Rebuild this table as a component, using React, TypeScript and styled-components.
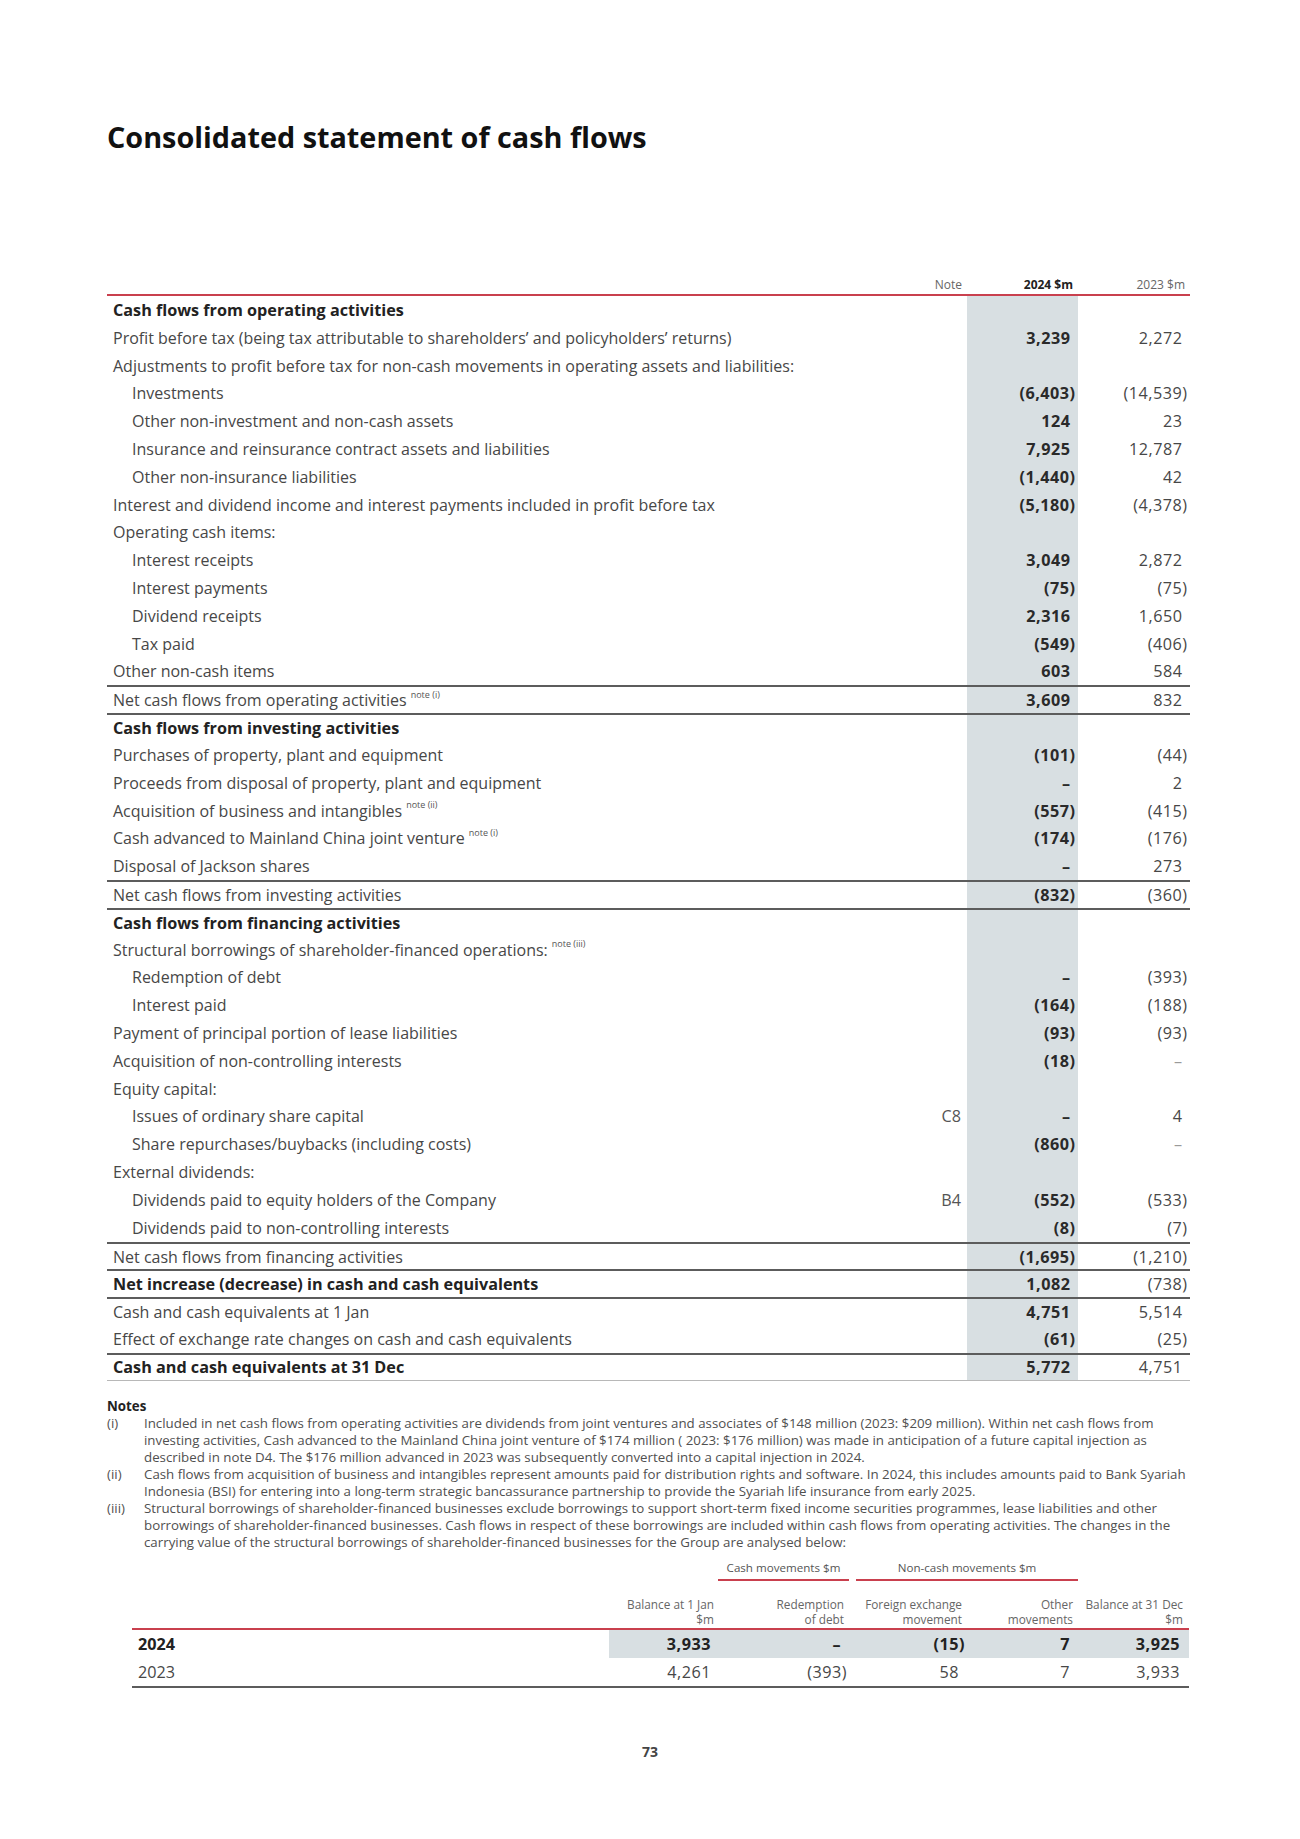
import React from 'react';
import styled, { createGlobalStyle, css } from 'styled-components';

const GlobalStyle = createGlobalStyle`
  html, body { margin: 0; padding: 0; background: #fff; }
  body { font-family: "Open Sans", "Noto Sans", sans-serif; color: #474747; }
`;

const RED = '#c9404e';
const GREY_BG = '#d8dfe2';
const LINE = '#5c5c5c';

const Page = styled.div`
  width: 1300px;
  min-height: 1839px;
  box-sizing: border-box;
  padding: 119px 110px 0 107px;
`;

const Title = styled.h1`
  margin: 0 0 121px 0;
  font-size: 28.8px;
  line-height: 36px;
  font-weight: 700;
  color: #111;
`;

const COLS = '793px 67px 111px 112px';

const HeaderRow = styled.div`
  display: grid;
  grid-template-columns: ${COLS};
  height: 20px;
  box-sizing: border-box;
  border-bottom: 2px solid ${RED};
  font-size: 12px;
  line-height: 18px;
`;

const HeadCell = styled.div<{ $bold?: boolean }>`
  text-align: right;
  padding-right: 5px;
  color: ${(p) => (p.$bold ? '#222' : '#666')};
  font-weight: ${(p) => (p.$bold ? 700 : 400)};
`;

const Row = styled.div<{ $top?: boolean; $last?: boolean }>`
  display: grid;
  grid-template-columns: ${COLS};
  height: 27.82px;
  box-sizing: border-box;
  font-size: 16.2px;
  ${(p) => p.$top && css`border-top: 2px solid ${LINE};`}
  ${(p) => p.$last && css`border-bottom: 1px solid #b8b8b8;`}
`;

const Label = styled.div<{ $indent?: boolean; $bold?: boolean }>`
  display: flex;
  align-items: center;
  padding-left: ${(p) => (p.$indent ? 25 : 6)}px;
  white-space: nowrap;
  font-size: ${(p) => (p.$bold ? 16.2 : 16)}px;
  font-weight: ${(p) => (p.$bold ? 700 : 400)};
  color: ${(p) => (p.$bold ? '#222' : '#474747')};
`;

const Sup = styled.span`
  font-size: 9px;
  position: relative;
  top: -6px;
  margin-left: 4px;
  color: #555;
`;

const NoteCell = styled.div`
  display: flex;
  align-items: center;
  justify-content: flex-end;
  padding-right: 6px;
  color: #555;
`;

const Num = styled.div<{ $paren?: boolean; $bold?: boolean; $shade?: boolean; $light?: boolean }>`
  display: flex;
  align-items: center;
  justify-content: flex-end;
  letter-spacing: 0.5px;
  padding-right: ${(p) => (p.$paren ? 2.5 : 7.5)}px;
  font-weight: ${(p) => (p.$bold ? 700 : 400)};
  color: ${(p) => (p.$light ? '#9a9a9a' : p.$bold ? '#2a2a2a' : '#474747')};
  background: ${(p) => (p.$shade ? GREY_BG : 'transparent')};
`;

const Notes = styled.div`
  margin-top: 17px;
  font-size: 13.3px;
  line-height: 17.1px;
  color: #505050;
`;

const NotesTitle = styled.div`
  font-weight: 700;
  color: #222;
`;

const NoteItem = styled.div`
  display: grid;
  grid-template-columns: 37px 1fr;
`;

const NoteLine = styled.span`
  display: block;
  white-space: nowrap;
`;

const SUBCOLS = '477px 109px 134px 114px 112px 111px';

const SubTable = styled.div`
  margin-left: 25px;
  width: 1057px;
  margin-top: 8px;
`;

const GroupRow = styled.div`
  display: grid;
  grid-template-columns: ${SUBCOLS};
  font-size: 11.6px;
  line-height: 16px;
  color: #555;
`;

const Group = styled.div<{ $col: string; $ml?: number; $mr?: number }>`
  grid-column: ${(p) => p.$col};
  margin-left: ${(p) => p.$ml ?? 0}px;
  margin-right: ${(p) => p.$mr ?? 0}px;
  text-align: center;
  padding-bottom: 3px;
  border-bottom: 2px solid ${RED};
`;

const SubHeadRow = styled.div`
  display: grid;
  grid-template-columns: ${SUBCOLS};
  margin-top: 16px;
  padding-bottom: 1px;
  border-bottom: 2px solid ${RED};
  font-size: 11.8px;
  line-height: 15px;
  color: #666;
`;

const SubHead = styled.div<{ $pr: number }>`
  text-align: right;
  padding-right: ${(p) => p.$pr}px;
`;

const SubRow = styled.div<{ $last?: boolean }>`
  display: grid;
  grid-template-columns: ${SUBCOLS};
  height: 28px;
  font-size: 16.2px;
  ${(p) => p.$last && css`border-bottom: 2px solid ${LINE};`}
`;

const SubLabel = styled.div<{ $bold?: boolean }>`
  display: flex;
  align-items: center;
  padding-left: 6px;
  font-weight: ${(p) => (p.$bold ? 700 : 400)};
  color: ${(p) => (p.$bold ? '#222' : '#474747')};
`;

const SubNum = styled.div<{ $pr: number; $bold?: boolean }>`
  display: flex;
  align-items: center;
  justify-content: flex-end;
  letter-spacing: 0.5px;
  padding-right: ${(p) => p.$pr}px;
  font-weight: ${(p) => (p.$bold ? 700 : 400)};
  color: ${(p) => (p.$bold ? '#222' : '#474747')};
  background: ${(p) => (p.$bold ? GREY_BG : 'transparent')};
`;

const PageNum = styled.div`
  margin-top: 54px;
  text-align: center;
  margin-right: -3px;
  font-size: 14px;
  line-height: 20px;
  font-weight: 700;
  color: #444;
`;

type R = {
  l: string;
  ind?: boolean;
  b?: boolean;
  sup?: string;
  note?: string;
  a?: string;
  c?: string;
  top?: boolean;
  last?: boolean;
};

const rows: R[] = [
  { l: 'Cash flows from operating activities', b: true },
  { l: 'Profit before tax (being tax attributable to shareholders’ and policyholders’ returns)', a: '3,239', c: '2,272' },
  { l: 'Adjustments to profit before tax for non-cash movements in operating assets and liabilities:' },
  { l: 'Investments', ind: true, a: '(6,403)', c: '(14,539)' },
  { l: 'Other non-investment and non-cash assets', ind: true, a: '124', c: '23' },
  { l: 'Insurance and reinsurance contract assets and liabilities', ind: true, a: '7,925', c: '12,787' },
  { l: 'Other non-insurance liabilities', ind: true, a: '(1,440)', c: '42' },
  { l: 'Interest and dividend income and interest payments included in profit before tax', a: '(5,180)', c: '(4,378)' },
  { l: 'Operating cash items:' },
  { l: 'Interest receipts', ind: true, a: '3,049', c: '2,872' },
  { l: 'Interest payments', ind: true, a: '(75)', c: '(75)' },
  { l: 'Dividend receipts', ind: true, a: '2,316', c: '1,650' },
  { l: 'Tax paid', ind: true, a: '(549)', c: '(406)' },
  { l: 'Other non-cash items', a: '603', c: '584' },
  { l: 'Net cash flows from operating activities', sup: 'note (i)', a: '3,609', c: '832', top: true },
  { l: 'Cash flows from investing activities', b: true, top: true },
  { l: 'Purchases of property, plant and equipment', a: '(101)', c: '(44)' },
  { l: 'Proceeds from disposal of property, plant and equipment', a: '–', c: '2' },
  { l: 'Acquisition of business and intangibles', sup: 'note (ii)', a: '(557)', c: '(415)' },
  { l: 'Cash advanced to Mainland China joint venture', sup: 'note (i)', a: '(174)', c: '(176)' },
  { l: 'Disposal of Jackson shares', a: '–', c: '273' },
  { l: 'Net cash flows from investing activities', a: '(832)', c: '(360)', top: true },
  { l: 'Cash flows from financing activities', b: true, top: true },
  { l: 'Structural borrowings of shareholder-financed operations:', sup: 'note (iii)' },
  { l: 'Redemption of debt', ind: true, a: '–', c: '(393)' },
  { l: 'Interest paid', ind: true, a: '(164)', c: '(188)' },
  { l: 'Payment of principal portion of lease liabilities', a: '(93)', c: '(93)' },
  { l: 'Acquisition of non-controlling interests', a: '(18)', c: '–' },
  { l: 'Equity capital:' },
  { l: 'Issues of ordinary share capital', ind: true, note: 'C8', a: '–', c: '4' },
  { l: 'Share repurchases/buybacks (including costs)', ind: true, a: '(860)', c: '–' },
  { l: 'External dividends:' },
  { l: 'Dividends paid to equity holders of the Company', ind: true, note: 'B4', a: '(552)', c: '(533)' },
  { l: 'Dividends paid to non-controlling interests', ind: true, a: '(8)', c: '(7)' },
  { l: 'Net cash flows from financing activities', a: '(1,695)', c: '(1,210)', top: true },
  { l: 'Net increase (decrease) in cash and cash equivalents', b: true, a: '1,082', c: '(738)', top: true },
  { l: 'Cash and cash equivalents at 1 Jan', a: '4,751', c: '5,514', top: true },
  { l: 'Effect of exchange rate changes on cash and cash equivalents', a: '(61)', c: '(25)' },
  { l: 'Cash and cash equivalents at 31 Dec', b: true, a: '5,772', c: '4,751', top: true, last: true },
];

const notes: { k: string; lines: string[] }[] = [
  {
    k: '(i)',
    lines: [
      'Included in net cash flows from operating activities are dividends from joint ventures and associates of $148 million (2023: $209 million). Within net cash flows from',
      'investing activities, Cash advanced to the Mainland China joint venture of $174 million ( 2023: $176 million) was made in anticipation of a future capital injection as',
      'described in note D4. The $176 million advanced in 2023 was subsequently converted into a capital injection in 2024.',
    ],
  },
  {
    k: '(ii)',
    lines: [
      'Cash flows from acquisition of business and intangibles represent amounts paid for distribution rights and software. In 2024, this includes amounts paid to Bank Syariah',
      'Indonesia (BSI) for entering into a long-term strategic bancassurance partnership to provide the Syariah life insurance from early 2025.',
    ],
  },
  {
    k: '(iii)',
    lines: [
      'Structural borrowings of shareholder-financed businesses exclude borrowings to support short-term fixed income securities programmes, lease liabilities and other',
      'borrowings of shareholder-financed businesses. Cash flows in respect of these borrowings are included within cash flows from operating activities. The changes in the',
      'carrying value of the structural borrowings of shareholder-financed businesses for the Group are analysed below:',
    ],
  },
];

const SUB_PR = [4, 8, 4, 5, 6];
const subHeads = [
  ['Balance at 1 Jan', '$m'],
  ['Redemption', 'of debt'],
  ['Foreign exchange', 'movement'],
  ['Other', 'movements'],
  ['Balance at 31 Dec', '$m'],
];
const subRows = [
  { y: '2024', b: true, v: ['3,933', '–', '(15)', '7', '3,925'] },
  { y: '2023', b: false, v: ['4,261', '(393)', '58', '7', '3,933'] },
];

const isParen = (s?: string) => !!s && s.startsWith('(');

export default function App() {
  return (
    <>
      <GlobalStyle />
      <Page>
        <Title>Consolidated statement of cash flows</Title>

        <HeaderRow>
          <div />
          <HeadCell>Note</HeadCell>
          <HeadCell $bold>2024 $m</HeadCell>
          <HeadCell>2023 $m</HeadCell>
        </HeaderRow>
        {rows.map((r, i) => (
          <Row key={i} $top={r.top} $last={r.last}>
            <Label $indent={r.ind} $bold={r.b}>
              {r.l}
              {r.sup && <Sup>{r.sup}</Sup>}
            </Label>
            <NoteCell>{r.note}</NoteCell>
            <Num $shade $bold $paren={isParen(r.a)}>
              {r.a}
            </Num>
            <Num $paren={isParen(r.c)} $light={r.c === '–'}>
              {r.c}
            </Num>
          </Row>
        ))}

        <Notes>
          <NotesTitle>Notes</NotesTitle>
          {notes.map((n) => (
            <NoteItem key={n.k}>
              <span>{n.k}</span>
              <div>
                {n.lines.map((l, i) => (
                  <NoteLine key={i}>{l}</NoteLine>
                ))}
              </div>
            </NoteItem>
          ))}
        </Notes>

        <SubTable>
          <GroupRow>
            <Group $col="3 / 4" $mr={3}>Cash movements $m</Group>
            <Group $col="4 / 6" $ml={4}>Non-cash movements $m</Group>
          </GroupRow>
          <SubHeadRow>
            <div />
            {subHeads.map((h, i) => (
              <SubHead key={i} $pr={SUB_PR[i]}>
                {h[0]}
                <br />
                {h[1]}
              </SubHead>
            ))}
          </SubHeadRow>
          {subRows.map((r, ri) => (
            <SubRow key={r.y} $last={ri === subRows.length - 1}>
              <SubLabel $bold={r.b}>{r.y}</SubLabel>
              {r.v.map((v, i) => (
                <SubNum key={i} $bold={r.b} $pr={SUB_PR[i] + (isParen(v) ? -3 : 3)}>
                  {v}
                </SubNum>
              ))}
            </SubRow>
          ))}
        </SubTable>

        <PageNum>73</PageNum>
      </Page>
    </>
  );
}
